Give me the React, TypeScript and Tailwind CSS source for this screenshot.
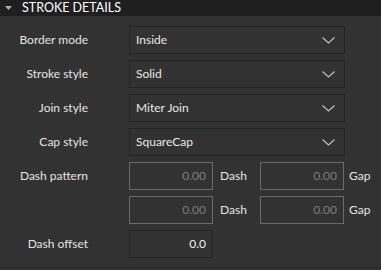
const Chevron = () => (
  <svg width="13" height="7" viewBox="0 0 13 7" className="shrink-0">
    <path d="M0.5 0.5 L6.5 6 L12.5 0.5" fill="none" stroke="#b8c0c8" strokeWidth="1.2" />
  </svg>
)

const Select = ({ value }: { value: string }) => (
  <div className="flex h-[28px] w-[216px] items-center justify-between border border-[#242424] bg-[#323232] pl-[6px] pr-[9px] text-[#e8e8e8]">
    <span>{value}</span>
    <Chevron />
  </div>
)

const NumBox = ({ value, disabled }: { value: string; disabled?: boolean }) => (
  <div
    className={
      disabled
        ? "flex h-[28px] w-[84px] items-center justify-end border border-[#6a6a6a] pr-[6px] text-[#7c7c7c]"
        : "flex h-[28px] w-[84px] items-center justify-end border border-[#242424] pr-[6px] text-[#f0f0f0]"
    }
  >
    {value}
  </div>
)

const Row = ({ label, children }: { label?: string; children: React.ReactNode }) => (
  <div className="flex items-center">
    <div className="w-[88px] text-right text-[#e4e4e4]">{label}</div>
    <div className="ml-[41px] flex items-center">{children}</div>
  </div>
)

export default function App() {
  return (
    <div className="h-[270px] w-[381px] bg-[#323232] text-[12px] font-['Lato',sans-serif]">
      <div className="flex h-[16px] items-center bg-[#1f1f1f] text-[12.5px] text-white">
        <svg width="7" height="4" viewBox="0 0 7 4" className="ml-[5px]">
          <path d="M0 0 H7 L3.5 4 Z" fill="#b0b0b0" />
        </svg>
        <span className="ml-[10px] leading-none">STROKE DETAILS</span>
      </div>
      <div className="flex flex-col gap-[6px] border-b border-[#262626] pt-[10px] pb-[9px]">
        <Row label="Border mode">
          <Select value="Inside" />
        </Row>
        <Row label="Stroke style">
          <Select value="Solid" />
        </Row>
        <Row label="Join style">
          <Select value="Miter Join" />
        </Row>
        <Row label="Cap style">
          <Select value="SquareCap" />
        </Row>
        <Row label="Dash pattern">
          <NumBox value="0.00" disabled />
          <span className="ml-[7px] w-[40px] text-[#e4e4e4]">Dash</span>
          <NumBox value="0.00" disabled />
          <span className="ml-[5px] text-[#e4e4e4]">Gap</span>
        </Row>
        <Row>
          <NumBox value="0.00" disabled />
          <span className="ml-[7px] w-[40px] text-[#e4e4e4]">Dash</span>
          <NumBox value="0.00" disabled />
          <span className="ml-[5px] text-[#e4e4e4]">Gap</span>
        </Row>
        <Row label="Dash offset">
          <NumBox value="0.0" />
        </Row>
      </div>
    </div>
  )
}
